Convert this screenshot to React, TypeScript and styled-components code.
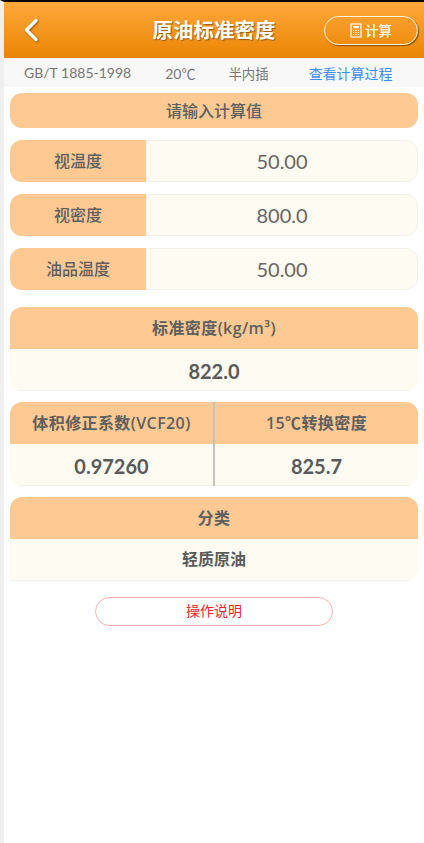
import React from 'react';
import styled, { createGlobalStyle } from 'styled-components';

const GlobalStyle = createGlobalStyle`
  html, body {
    margin: 0;
    padding: 0;
    background: #fff;
    font-family: "Lato", "Noto Sans CJK SC", sans-serif;
  }
`;

const Page = styled.div`
  width: 424px;
  height: 843px;
  box-sizing: border-box;
  border-top: 2px solid #050505;
  border-left: 4px solid #efefef;
  background: #fff;
  overflow: hidden;
`;

const Header = styled.header`
  height: 56px;
  display: grid;
  grid-template-columns: 1fr auto 1fr;
  align-items: center;
  padding: 0 6px 0 18px;
  background: linear-gradient(#ffa83c, #e98503);
`;

const BackIcon = styled.svg`
  width: 18px;
  height: 26px;
  filter: drop-shadow(1px 1px 1px rgba(70, 40, 0, 0.55));
`;

const Title = styled.h1`
  margin: 0 12px 0 0;
  font-size: 20.5px;
  line-height: 28px;
  font-weight: 700;
  color: #fff;
  text-shadow: 1px 1px 1px rgba(70, 40, 0, 0.55);
`;

const CalcButton = styled.button`
  width: 94px;
  height: 29px;
  padding: 0;
  justify-self: end;
  display: flex;
  align-items: center;
  justify-content: center;
  gap: 3px;
  background: transparent;
  border: 1.5px solid #fff2df;
  border-radius: 15px;
  box-shadow: 1px 1px 1px rgba(70, 40, 0, 0.6);
  color: #fff;
  font-family: inherit;
  font-size: 13.5px;
  font-weight: 500;
`;

const SubBar = styled.div`
  height: 29px;
  display: flex;
  align-items: center;
  padding-left: 20px;
  background: #f8f8f8;
  font-size: 14px;
  color: #777;
`;

const SubItem = styled.span<{ $gap: number; $blue?: boolean; $size?: number }>`
  margin-left: ${(p) => p.$gap}px;
  flex: none;
  font-size: ${(p) => p.$size ?? 14}px;
  color: ${(p) => (p.$blue ? '#3e8ef7' : '#777')};
`;

const Content = styled.main`
  padding: 6px 6px 0;
  display: flex;
  flex-direction: column;
`;

const SectionTitle = styled.div`
  height: 35px;
  box-sizing: border-box;
  padding-bottom: 2px;
  display: flex;
  align-items: center;
  justify-content: center;
  border-radius: 12px;
  background: #fec993;
  color: #5f5f5f;
  font-size: 16px;
  font-weight: 500;
`;

const InputRows = styled.div`
  margin-top: 12px;
  display: flex;
  flex-direction: column;
  gap: 12px;
`;

const InputRow = styled.div`
  height: 42px;
  display: flex;
`;

const InputLabel = styled.div`
  width: 136px;
  box-sizing: border-box;
  padding-bottom: 3px;
  display: flex;
  align-items: center;
  justify-content: center;
  flex: none;
  border-radius: 12px 0 0 12px;
  background: #fec993;
  color: #5f5f5f;
  font-size: 16px;
  font-weight: 500;
`;

const InputValue = styled.div`
  flex: 1;
  display: flex;
  align-items: center;
  justify-content: center;
  box-sizing: border-box;
  border: 1px solid #f2f1ea;
  border-radius: 0 12px 12px 0;
  background: #fdfbf2;
  color: #666;
  font-size: 20px;
`;

const Card = styled.section<{ $gap: number; $flatCorner?: boolean }>`
  margin-top: ${(p) => p.$gap}px;
  display: flex;
  border-radius: ${(p) => (p.$flatCorner ? '12px 12px 12px 0' : '12px')};
  overflow: hidden;
`;

const Column = styled.div<{ $divider?: boolean }>`
  flex: 1 1 0;
  min-width: 0;
  display: flex;
  flex-direction: column;
  border-right: ${(p) => (p.$divider ? '2px solid #c4c4be' : 'none')};
`;

const CardHead = styled.div`
  height: 42px;
  box-sizing: border-box;
  padding-bottom: 3px;
  display: flex;
  align-items: center;
  justify-content: center;
  background: #fec993;
  color: #5f5f5f;
  font-family: "Open Sans", "Noto Sans CJK SC", sans-serif;
  font-size: 16px;
  font-weight: 600;
  letter-spacing: 0.4px;
  white-space: nowrap;
`;

const CardValue = styled.div<{ $size?: number; $lift?: number }>`
  height: 42px;
  box-sizing: border-box;
  padding: ${(p) => (p.$lift ? `0 0 ${p.$lift}px` : '2px 0 0')};
  display: flex;
  align-items: center;
  justify-content: center;
  background: #fdfbf2;
  border-bottom: 1px solid #f3f2ec;
  color: #5a5a5a;
  font-size: ${(p) => p.$size ?? 20}px;
  font-weight: 700;
`;

const HelpButton = styled.button`
  width: 238px;
  height: 29px;
  margin: 16px auto 0;
  padding: 0 0 3px;
  display: block;
  background: #fff;
  border: 1.5px solid #ffb1b1;
  border-radius: 15px;
  color: #f5222d;
  font-family: inherit;
  font-size: 14px;
`;

export default function App() {
  return (
    <>
      <GlobalStyle />
      <Page>
        <Header>
          <BackIcon viewBox="0 0 18 26" fill="none">
            <path d="M14 3.5 4.5 13l9.5 9.5" stroke="#fff" strokeWidth="3.2" strokeLinecap="round" strokeLinejoin="round" />
          </BackIcon>
          <Title>原油标准密度</Title>
          <CalcButton>
            <svg width="12" height="15" viewBox="0 0 12 15" fill="none">
              <rect x="1" y="1" width="10" height="13" stroke="#fff" strokeWidth="1.2" />
              <rect x="3" y="3" width="6" height="2.2" fill="#fff" />
              <path d="M3 7.5h6M3 9.5h6M3 11.5h6" stroke="#fff" strokeWidth="1.1" strokeDasharray="1.2 1.2" />
            </svg>
            计算
          </CalcButton>
        </Header>
        <SubBar>
          <SubItem $gap={0}>GB/T 1885-1998</SubItem>
          <SubItem $gap={34}>20℃</SubItem>
          <SubItem $gap={33} $size={13.4}>半内插</SubItem>
          <SubItem $gap={40} $blue>查看计算过程</SubItem>
        </SubBar>
        <Content>
          <SectionTitle>请输入计算值</SectionTitle>
          <InputRows>
            <InputRow>
              <InputLabel>视温度</InputLabel>
              <InputValue>50.00</InputValue>
            </InputRow>
            <InputRow>
              <InputLabel>视密度</InputLabel>
              <InputValue>800.0</InputValue>
            </InputRow>
            <InputRow>
              <InputLabel>油品温度</InputLabel>
              <InputValue>50.00</InputValue>
            </InputRow>
          </InputRows>
          <Card $gap={17}>
            <Column>
              <CardHead>标准密度(kg/m³)</CardHead>
              <CardValue>822.0</CardValue>
            </Column>
          </Card>
          <Card $gap={11}>
            <Column $divider>
              <CardHead>体积修正系数(VCF20)</CardHead>
              <CardValue>0.97260</CardValue>
            </Column>
            <Column>
              <CardHead>15℃转换密度</CardHead>
              <CardValue>825.7</CardValue>
            </Column>
          </Card>
          <Card $gap={11} $flatCorner>
            <Column>
              <CardHead>分类</CardHead>
              <CardValue $size={16} $lift={3}>轻质原油</CardValue>
            </Column>
          </Card>
          <HelpButton>操作说明</HelpButton>
        </Content>
      </Page>
    </>
  );
}
